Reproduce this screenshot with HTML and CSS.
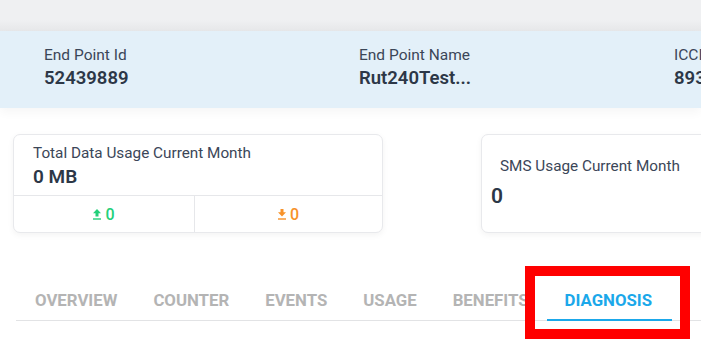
FILE: index.html
```html
<!DOCTYPE html>
<html lang="en">
<head>
  <meta charset="UTF-8">
  <title>End Point Detail</title>
  <link rel="stylesheet" href="styles.css">
</head>
<body>

  <div class="topbar"></div>

  <!-- Datos del end point -->
  <div class="endpoint">
    <div class="ep-col">
      <div class="ep-label">End Point Id</div>
      <div class="ep-value">52439889</div>
    </div>
    <div class="ep-col">
      <div class="ep-label">End Point Name</div>
      <div class="ep-value">Rut240Test...</div>
    </div>
    <div class="ep-col">
      <div class="ep-label">ICCID</div>
      <div class="ep-value">8934071100000000000</div>
    </div>
  </div>

  <!-- Tarjetas de consumo -->
  <div class="cards">
    <div class="card">
      <div class="card-body">
        <div class="card-title">Total Data Usage Current Month</div>
        <div class="card-value">0 MB</div>
      </div>
      <div class="card-split">
        <div class="split up">
          <svg width="8" height="11" viewBox="0 0 8 11"><path d="M4 0L8 4.2H5.5V7.5H2.5V4.2H0Z" fill="currentColor"/><rect x="0" y="9.3" width="8" height="1.4" fill="currentColor"/></svg>
          <span>0</span>
        </div>
        <div class="split down">
          <svg width="8" height="11" viewBox="0 0 8 11"><path d="M4 7.5L8 3.3H5.5V0H2.5V3.3H0Z" fill="currentColor"/><rect x="0" y="9.3" width="8" height="1.4" fill="currentColor"/></svg>
          <span>0</span>
        </div>
      </div>
    </div>
    <div class="card card-sms">
      <div class="card-title">SMS Usage Current Month</div>
      <div class="card-value">0</div>
    </div>
  </div>

  <!-- Pestañas -->
  <ul class="tabs">
    <li>OVERVIEW</li>
    <li>COUNTER</li>
    <li>EVENTS</li>
    <li>USAGE</li>
    <li>BENEFITS</li>
    <li class="active">DIAGNOSIS</li>
  </ul>

  <div class="highlight"></div>

</body>
</html>
```

FILE: styles.css
```css
/* Reset básico */
* { margin: 0; padding: 0; box-sizing: border-box; }
body {
  font-family: Roboto, "Liberation Sans", sans-serif;
  background-color: #fff;
  width: 701px;
  height: 344px;
  overflow: hidden;
  position: relative;
  color: #2e3a4b;
}

/* Barra superior */
.topbar {
  height: 31px;
  background: linear-gradient(#eff0f2 0, #eff0f2 20px, #e6e7e9 31px);
}

/* Banda de datos */
.endpoint {
  height: 77px;
  background-color: #e3f0f9;
  display: flex;
  padding: 15px 0 0 44px;
  box-shadow: 0 5px 9px rgba(0,0,0,0.035);
  white-space: nowrap;
  overflow: hidden;
}
.ep-col { width: 315px; flex-shrink: 0; }
.ep-label {
  font-size: 15.5px;
  color: #3b4658;
  line-height: 18px;
}
.ep-value {
  font-size: 18.5px;
  font-weight: 600;
  color: #2c3747;
  line-height: 24px;
  margin-top: 2px;
}

/* Tarjetas */
.cards {
  display: flex;
  gap: 98px;
  padding-left: 13px;
  margin-top: 26px;
}
.card {
  width: 370px;
  height: 99px;
  flex-shrink: 0;
  border: 1px solid #e8e9ec;
  border-radius: 7px;
  box-shadow: 0 2px 6px rgba(0,0,0,0.05);
  background: #fff;
  display: flex;
  flex-direction: column;
}
.card-body { padding: 9px 0 0 19px; height: 61px; border-bottom: 1px solid #e6e7ea; }
.card-title { font-size: 15.3px; color: #3b4658; line-height: 18px; }
.card-value {
  font-size: 19px;
  font-weight: 600;
  color: #2c3747;
  line-height: 24px;
  margin-top: 3px;
}
.card-split { display: flex; flex: 1; }
.split {
  flex: 1;
  display: flex;
  align-items: center;
  justify-content: center;
  gap: 4px;
  font-size: 16px;
  font-weight: 500;
}
.split.up { flex: 0 0 180px; }
.split + .split { border-left: 1px solid #e6e7ea; }
.split.up { color: #24d07a; }
.split.down { color: #f7922a; }

.card-sms { width: 300px; padding: 22px 0 0 9px; }
.card-sms .card-title { padding-left: 9px; }
.card-sms .card-value { margin-top: 9px; font-size: 21px; }

/* Pestañas */
.tabs {
  list-style: none;
  display: flex;
  margin: 47px 0 0 16px;
  border-bottom: 1px solid #e2e3e5;
  white-space: nowrap;
}
.tabs li {
  font-size: 16.8px;
  font-weight: 700;
  color: #b4b4b4;
  padding: 11px 18px 10px;
  line-height: 18px;
  border-bottom: 2px solid transparent;
  margin-bottom: -1px;
}
.tabs li:first-child { padding-left: 19px; }
.tabs li.active {
  color: #1ba8ea;
  border-bottom-color: #1ba8ea;
  padding-right: 20px;
}

/* Recuadro rojo */
.highlight {
  position: absolute;
  left: 525px;
  top: 266px;
  width: 165px;
  height: 73px;
  border: 10px solid #ff0000;
}
```
